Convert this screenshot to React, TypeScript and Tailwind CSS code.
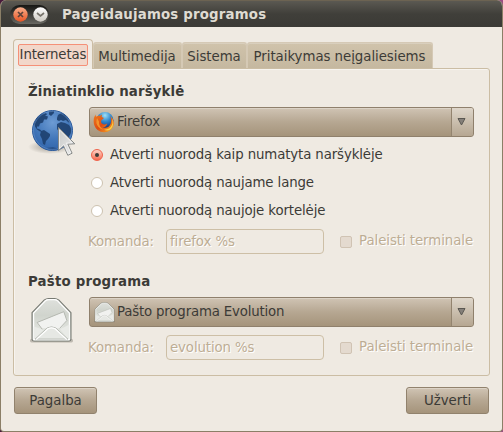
import React from "react";

function Globe() {
  return (
    <svg width="48" height="50" viewBox="0 0 48 50" className="block">
      <defs>
        <radialGradient id="sea" cx="0.5" cy="0.3" r="0.75">
          <stop offset="0" stopColor="#6d9bd3" />
          <stop offset="0.55" stopColor="#4277ba" />
          <stop offset="1" stopColor="#2f62a8" />
        </radialGradient>
        <radialGradient id="globeShadow">
          <stop offset="0" stopColor="#8a857c" stopOpacity="0.8" />
          <stop offset="1" stopColor="#8a857c" stopOpacity="0" />
        </radialGradient>
        <linearGradient id="pointer" x1="0" y1="0" x2="1" y2="1">
          <stop offset="0" stopColor="#c6c8c7" />
          <stop offset="1" stopColor="#ececec" />
        </linearGradient>
      </defs>
      <ellipse cx="22" cy="40" rx="22" ry="7" fill="url(#globeShadow)" />
      <circle cx="24.5" cy="23.5" r="20" fill="url(#sea)" stroke="#2a5a9c" />
      <g fill="#1e4170" fillOpacity=".92">
        <path d="M6 17 9 11l5-4 4-1 1 1.500-2 1 3 1-1 3-3 0-1 3-3 1-1 3-2 0 0 2 3 1 2 2-2 0-3-2-2-3z" />
        <path d="M13 24l3-1 3 2 3 2 0 2-2 3-2 2-1 4-2-1-1-5-2-4z" />
        <path d="M21 4.500l5-.5 0 2-3 3-2-1.500z" />
        <path d="M29 11l1-3 3-2 4 2 3 4 2 4-2-1-2-2-3 1-2-1-2 1-2-1z" />
        <path d="M29 17l4-2 4 1 4 2 2.500 4-.5 4-3 5-2 1-2-3-1-4-4 0-2-3z" />
        <path d="M18 41l7-1 6 2-7 1z" opacity=".6" />
      </g>
      <circle cx="24.500" cy="23.500" r="19" fill="none" stroke="#89afe0" strokeOpacity=".35" />
      <path d="M30.500 20.500v23.200l5.100-4.800 4.200 9.400 4.300-2.100-4.300-9 7-.4z" fill="url(#pointer)" stroke="#858887" strokeWidth="1" />
      <path d="M31.500 23v18.500l4.400-4.200 4.400 9.600 2.400-1.200-4.500-9.600 6-.3z" fill="none" stroke="#fff" strokeOpacity=".6" strokeWidth=".9" />
    </svg>
  );
}

function Envelope({ width, height }: { width: number; height: number }) {
  return (
    <svg width={width} height={height} viewBox="0 0 42 48" preserveAspectRatio="none" className="block shrink-0">
      <defs>
        <linearGradient id="env" x1="0" y1="0" x2="0" y2="1">
          <stop offset="0" stopColor="#dfe1dd" />
          <stop offset=".4" stopColor="#d0d4cd" />
          <stop offset="1" stopColor="#edefeb" />
        </linearGradient>
      </defs>
      <rect x="0" y="43" width="42" height="3.500" rx="1.500" fill="#77736a" opacity=".4" />
      <path d="M2 16 14 3q2-1.500 4-1.500h6q2 0 4 1.500l12 13v27q0 2-2 2H4q-2 0-2-2z" fill="url(#env)" stroke="#777a73" strokeWidth="1.100" />
      <path d="M3.500 16.500 15 4q1.500-1.300 3.500-1.300h5q2 0 3.500 1.300l11.500 12.500V43.500h-35z" fill="none" stroke="#fff" strokeWidth="1.200" />
      <path d="M3.500 43.500V30l10 3.500zM38.500 43.500V28l-9 5z" fill="#e9ebe7" />
      <path d="M7 26 33 15l3 9-6 8H11z" fill="#f1f2f0" />
      <path d="M12 33 7 26 33 15l3 9-7 8" fill="none" stroke="#b0b3ac" strokeWidth=".9" />
      <path d="M5 43 17 31.500q4-2 8 0L37 43z" fill="#e6e8e4" stroke="#a9aca5" strokeWidth=".8" />
      <path d="M6 43.500 17.500 32.500q3.500-2 7 0L36 43.500" fill="none" stroke="#fff" strokeWidth="1.200" />
    </svg>
  );
}

function FirefoxLogo() {
  return (
    <svg width="22" height="22" viewBox="0 0 22 22" className="block shrink-0">
      <defs>
        <radialGradient id="ffBlue" cx=".5" cy=".2" r=".8">
          <stop offset="0" stopColor="#9ee0f7" />
          <stop offset=".45" stopColor="#3188cd" />
          <stop offset="1" stopColor="#172c70" />
        </radialGradient>
        <linearGradient id="ffFire" x1="0" y1="0" x2="1" y2="1">
          <stop offset="0" stopColor="#ee7b20" />
          <stop offset=".5" stopColor="#df4c11" />
          <stop offset="1" stopColor="#f7b52b" />
        </linearGradient>
      </defs>
      <circle cx="12" cy="9.500" r="8.500" fill="url(#ffBlue)" />
      <path d="M2.500 3.500q0 1.500.7 2.200Q5 4.300 7 4.800L9 3.500 8.700 6l2.300 1-2.600 2.200q-1 2.300.8 3.600 2.300 1.500 5-.4-1 3.800-4.700 4 5.500 1.800 8-3.400 1.400-3.600-.2-8 4.500 4.500 3.400 9Q18.700 21.300 11 21.200 3.600 21 1.200 14-.4 8 2.500 3.500z" fill="url(#ffFire)" />
      <path d="M17.500 4.500q3 5 1.500 9.300-2.300 5.400-8.500 4.800 5.800 3 9-2.800 2.300-5.500-2-11.300z" fill="#fbcf45" />
      <path d="M4 7q-2 5 1.500 9 2.500 2.500 5 2.500-5-3-4.500-8z" fill="#f3922c" />
    </svg>
  );
}

function Combo({ icon, label }: { icon: React.ReactNode; label: string }) {
  return (
    <div className="flex h-[30px] w-[385px] overflow-hidden rounded-[3px] border border-[#8f806c] bg-linear-to-b from-[#d0c4b4] via-[#b6a792] to-[#a5947b] shadow-[inset_0_1px_0_#dcd3c6]">
      <div className="flex flex-1 items-center gap-[2px] pl-[3px]">
        {icon}
        <span className="pb-[2px] tracking-[-0.18px]">{label}</span>
      </div>
      <div className="flex w-[22px] items-center justify-center border-l border-[#93846f] bg-linear-to-b from-[#ded6ca] to-[#b6a792]">
        <svg width="9" height="9" viewBox="0 0 9 9" className="mr-[3px] mb-px">
          <path d="M1 1.500h7L4.500 8z" fill="#85807a" stroke="#5b5852" strokeWidth="1" />
        </svg>
      </div>
    </div>
  );
}

function Radio({ label, checked = false }: { label: string; checked?: boolean }) {
  return (
    <div className="flex h-7 items-center gap-[7px] pl-[2px]">
      {checked ? (
        <span className="flex size-3 items-center justify-center rounded-full border border-[#f0624a] bg-linear-to-b from-[#fbd3c8] to-[#f8694f]">
          <span className="size-1 rounded-full bg-[#3c3b37]" />
        </span>
      ) : (
        <span className="size-3 rounded-full border border-[#cdc2b0] bg-white" />
      )}
      <span className="pb-[2px]">{label}</span>
    </div>
  );
}

function Command({ value }: { value: string }) {
  return (
    <div className="flex h-[25px] items-center text-[#bdad94] [text-shadow:1px_1px_0_#fff]">
      <span className="w-[79px] pl-px">Komanda:</span>
      <span className="flex h-[25px] w-[158px] items-center rounded-[4px] border border-[#cdbfa6] pl-[3px]">{value}</span>
      <span className="ml-4 size-3 rounded-[2px] border border-[#d0c3b3] bg-[#e4dacf]" />
      <span className="ml-[7px] pb-[2px] tracking-[-0.06px]">Paleisti terminale</span>
    </div>
  );
}

function Tab({ label, width }: { label: string; width: string }) {
  return (
    <div className={`${width} flex h-[26px] items-center justify-center rounded-t-[3px] border border-b-0 border-[#d5c9b5] bg-linear-to-b from-[#d0c3ab] to-[#c5b8a0] pt-px pr-px tracking-[-0.04px] shadow-[inset_0_1px_0_#d9cfbd]`}>
      {label}
    </div>
  );
}

function Button({ label }: { label: string }) {
  return (
    <button className="flex h-[27px] w-[83px] items-center justify-center rounded-[3px] border border-[#91826d] bg-linear-to-b from-[#d0c4b4] via-[#b6a792] to-[#a5947b] tracking-normal shadow-[inset_0_1px_0_#dcd3c6]">
      {label}
    </button>
  );
}

export default function App() {
  return (
    <div className="h-[432px] w-[503px] overflow-hidden bg-linear-to-r from-[#481a3b] to-[#9b4d84] font-['DejaVu_Sans',sans-serif] text-[13.33px] leading-[17px] tracking-[-0.12px] whitespace-nowrap text-[#3c3b37]">
      <div className="flex h-full flex-col overflow-hidden rounded-t-[6px] rounded-b-[4px] border border-t-0 border-[#8b7f67] bg-[#efeae2]">
        <header className="flex h-[27px] shrink-0 items-center border-t border-[#6c6352] bg-linear-to-b from-[#5b5952] via-[#403f3a] to-[#3b3a36] pl-[9px]">
          <div className="flex h-[19px] w-[39px] items-center gap-[5px] rounded-full bg-linear-to-b from-[#171714] to-[#696862] pl-[3px]">
            <svg width="15" height="15" viewBox="0 0 15 15">
              <defs>
                <linearGradient id="close" x1="0" y1="0" x2="0" y2="1">
                  <stop offset="0" stopColor="#f7ae8b" />
                  <stop offset="1" stopColor="#e95524" />
                </linearGradient>
              </defs>
              <circle cx="7.500" cy="7.500" r="7.200" fill="url(#close)" />
              <path d="M5 5l5 5M10 5l-5 5" stroke="#5d4239" strokeWidth="1.700" />
            </svg>
            <svg width="15" height="15" viewBox="0 0 15 15">
              <defs>
                <linearGradient id="shade" x1="0" y1="0" x2="0" y2="1">
                  <stop offset="0" stopColor="#fff" />
                  <stop offset="1" stopColor="#cdc9c1" />
                </linearGradient>
              </defs>
              <circle cx="7.500" cy="7.500" r="7.200" fill="url(#shade)" />
              <path d="M4 6l3.500 3L11 6" fill="none" stroke="#77736b" strokeWidth="1.700" />
            </svg>
          </div>
          <h1 className="ml-[13px] font-bold tracking-[0.18px] text-[#dfdbd2]">Pageidaujamos programos</h1>
        </header>
        <main className="flex flex-1 flex-col px-3 pt-3">
          <nav className="flex items-end">
            <div className="z-10 -mb-px flex h-[30px] w-[80px] justify-center rounded-t-[4px] border border-b-0 border-[#cbbda4] bg-[#f1ece5] pt-1">
              <span className="flex h-[22px] w-[70px] items-center justify-center rounded-[2px] border border-[#f59078] bg-[#f2d7ca] pb-[2px]">Internetas</span>
            </div>
            <Tab label="Multimedija" width="w-[89px]" />
            <Tab label="Sistema" width="w-[65px]" />
            <Tab label="Pritaikymas neįgaliesiems" width="w-[186px]" />
          </nav>
          <section className="h-[308px] w-[477px] rounded-[3px] rounded-tl-none border border-[#cbbda4] pt-[14px] pl-[14px] shadow-[inset_1px_1px_0_#f7f4ef]">
            <h2 className="h-6 font-bold tracking-[0.13px]">Žiniatinklio naršyklė</h2>
            <div className="flex">
              <div className="w-[61px]"><Globe /></div>
              <div>
                <Combo label="Firefox" icon={<FirefoxLogo />} />
                <div className="mt-[4px]">
                  <Radio label="Atverti nuorodą kaip numatyta naršyklėje" checked />
                  <Radio label="Atverti nuorodą naujame lange" />
                  <Radio label="Atverti nuorodą naujoje kortelėje" />
                </div>
                <div className="-ml-[2px] mt-[4px]"><Command value="firefox %s" /></div>
              </div>
            </div>
            <h2 className="mt-[19px] h-6 font-bold tracking-[0.2px]">Pašto programa</h2>
            <div className="flex">
              <div className="w-[61px] pl-[2px]"><Envelope width={43} height={47} /></div>
              <div>
                <Combo label="Pašto programa Evolution" icon={<span className="flex w-[22px] justify-center"><Envelope width={21} height={21} /></span>} />
                <div className="-ml-[2px] mt-[8px]"><Command value="evolution %s" /></div>
              </div>
            </div>
          </section>
          <footer className="mt-[11px] flex justify-between pr-px pl-px">
            <Button label="Pagalba" />
            <Button label="Užverti" />
          </footer>
        </main>
      </div>
    </div>
  );
}
